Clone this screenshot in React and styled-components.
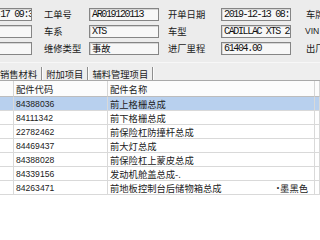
import styled, { createGlobalStyle } from 'styled-components'

const CJK = '"Noto Sans CJK SC", "Noto Sans", sans-serif'
const MONO = '"Liberation Mono", "DejaVu Sans Mono", monospace'
const SANS = '"Liberation Sans", Arial, sans-serif'

const GlobalStyle = createGlobalStyle`
  html, body {
    margin: 0;
    padding: 0;
    background: #fff;
    overflow: hidden;
  }
`

const fields = [
  [
    { value: '2019-12-17 09:3' },
    { label: '工单号', pad: 12 },
    { value: 'AR019120113' },
    { label: '开单日期', pad: 9 },
    { value: '2019-12-13 08:(' },
    { label: '车牌', pad: 15 }
  ],
  [
    { value: '' },
    { label: '车系', pad: 12 },
    { value: 'XTS' },
    { label: '车型', pad: 9 },
    { value: 'CADILLAC XTS 2.' },
    { label: 'VIN', pad: 14, latin: true }
  ],
  [
    { value: '' },
    { label: '维修类型', pad: 12 },
    { value: '事故', cjk: true },
    { label: '进厂里程', pad: 9 },
    { value: '61404.00' },
    { label: '出厂', pad: 15 }
  ]
]

const tabs = ['销售材料', '附加项目', '辅料管理项目']

const parts = [
  { code: '84388036', name: '前上格栅总成', selected: true },
  { code: '84111342', name: '前下格栅总成' },
  { code: '22782462', name: '前保险杠防撞杆总成' },
  { code: '84469437', name: '前大灯总成' },
  { code: '84388028', name: '前保险杠上蒙皮总成' },
  { code: '84339156', name: '发动机舱盖总成-.' },
  { code: '84263471', name: '前地板控制台后储物箱总成', color: '墨黑色' }
]

const Window = styled.div`
  width: 320px;
  height: 240px;
  overflow: hidden;
  display: flex;
  flex-direction: column;
  background: #fff;
  font-family: ${CJK};
  color: #1e1e1e;
`

const FormPanel = styled.div`
  flex: none;
  height: 62px;
  box-sizing: border-box;
  padding-top: 8px;
  background: #ececec;
`

const FormGrid = styled.div`
  display: grid;
  margin-left: -40px;
  grid-template-columns: 72px 57px 70px 62px 70px 60px;
  grid-auto-rows: 13px;
  row-gap: 4px;
  align-items: center;
`

const Label = styled.div`
  padding-left: ${p => p.pad}px;
  font-family: ${p => p.latin ? SANS : CJK};
  font-size: ${p => p.latin ? '8.6px' : '9.3px'};
  line-height: 13px;
  white-space: nowrap;
  color: #1a1a1a;
`

const Field = styled.div`
  box-sizing: border-box;
  height: 13px;
  padding-left: 2px;
  border: 1px solid #858585;
  box-shadow: inset 1px 1px 0 #d6d6d6;
  background: #f7f7f7;
  font-family: ${p => p.cjk ? CJK : MONO};
  font-size: ${p => p.cjk ? '9.3px' : '10px'};
  letter-spacing: ${p => p.cjk ? '0' : '-1.35px'};
  line-height: 11px;
  white-space: nowrap;
  overflow: hidden;
  color: #111;
`

const TabBar = styled.div`
  flex: none;
  height: 19px;
  box-sizing: border-box;
  display: flex;
  align-items: flex-end;
  background: #eeeeee;
  border-top: 1px solid #f7f7f7;
  border-bottom: 1px solid #a9a9a9;
`

const Tab = styled.div`
  height: 13px;
  display: flex;
  align-items: center;
  padding: 0 4px;
  border-right: 1px solid #8e8e8e;
  box-shadow: 1px 0 0 #fbfbfb;
  font-size: 9.3px;
  white-space: nowrap;
  color: #1a1a1a;

  &:first-child {
    margin-left: -4px;
  }
`

const Table = styled.div`
  display: grid;
  grid-template-columns: 14px 94px 207px 1fr;
  grid-template-rows: 16px;
  grid-auto-rows: 14px;
`

const HeadCell = styled.div`
  box-sizing: border-box;
  padding-left: 2px;
  display: flex;
  align-items: center;
  background: #fcfcfc;
  border-right: 1px solid #d6d6d6;
  border-bottom: 1px solid #bdbdbd;
  font-size: 9.3px;
  white-space: nowrap;
  color: #1a1a1a;
`

const Cell = styled.div`
  box-sizing: border-box;
  padding-left: 2px;
  display: flex;
  align-items: center;
  justify-content: space-between;
  background: ${p => p.selected ? '#b8d0ee' : '#fff'};
  border-right: 1px solid #d9d9d9;
  border-bottom: 1px solid #d9d9d9;
  font-family: ${p => p.digits ? SANS : CJK};
  font-size: ${p => p.digits ? '8.6px' : '9.3px'};
  white-space: nowrap;
  overflow: hidden;
  color: #222;
`

const ColorNote = styled.span`
  display: flex;
  align-items: center;
  padding-right: 6px;
`

const Bullet = styled.span`
  font-family: ${SANS};
  font-size: 7px;
  margin-right: 1px;
`

export default function App () {
  return (
    <>
      <GlobalStyle />
      <Window>
        <FormPanel>
          <FormGrid>
            {fields.flat().map((f, i) => f.label
              ? <Label key={i} pad={f.pad} latin={f.latin}>{f.label}</Label>
              : <Field key={i} cjk={f.cjk}>{f.value}</Field>
            )}
          </FormGrid>
        </FormPanel>
        <TabBar>
          {tabs.map(t => <Tab key={t}>{t}</Tab>)}
        </TabBar>
        <Table>
          <HeadCell />
          <HeadCell>配件代码</HeadCell>
          <HeadCell>配件名称</HeadCell>
          <HeadCell />
          {parts.map(p => [
            <Cell key={p.code + 'i'} selected={p.selected} />,
            <Cell key={p.code + 'c'} selected={p.selected} digits>{p.code}</Cell>,
            <Cell key={p.code + 'n'} selected={p.selected}>
              <span>{p.name}</span>
              {p.color && <ColorNote><Bullet>•</Bullet>{p.color}</ColorNote>}
            </Cell>,
            <Cell key={p.code + 'x'} selected={p.selected} />
          ])}
        </Table>
      </Window>
    </>
  )
}
